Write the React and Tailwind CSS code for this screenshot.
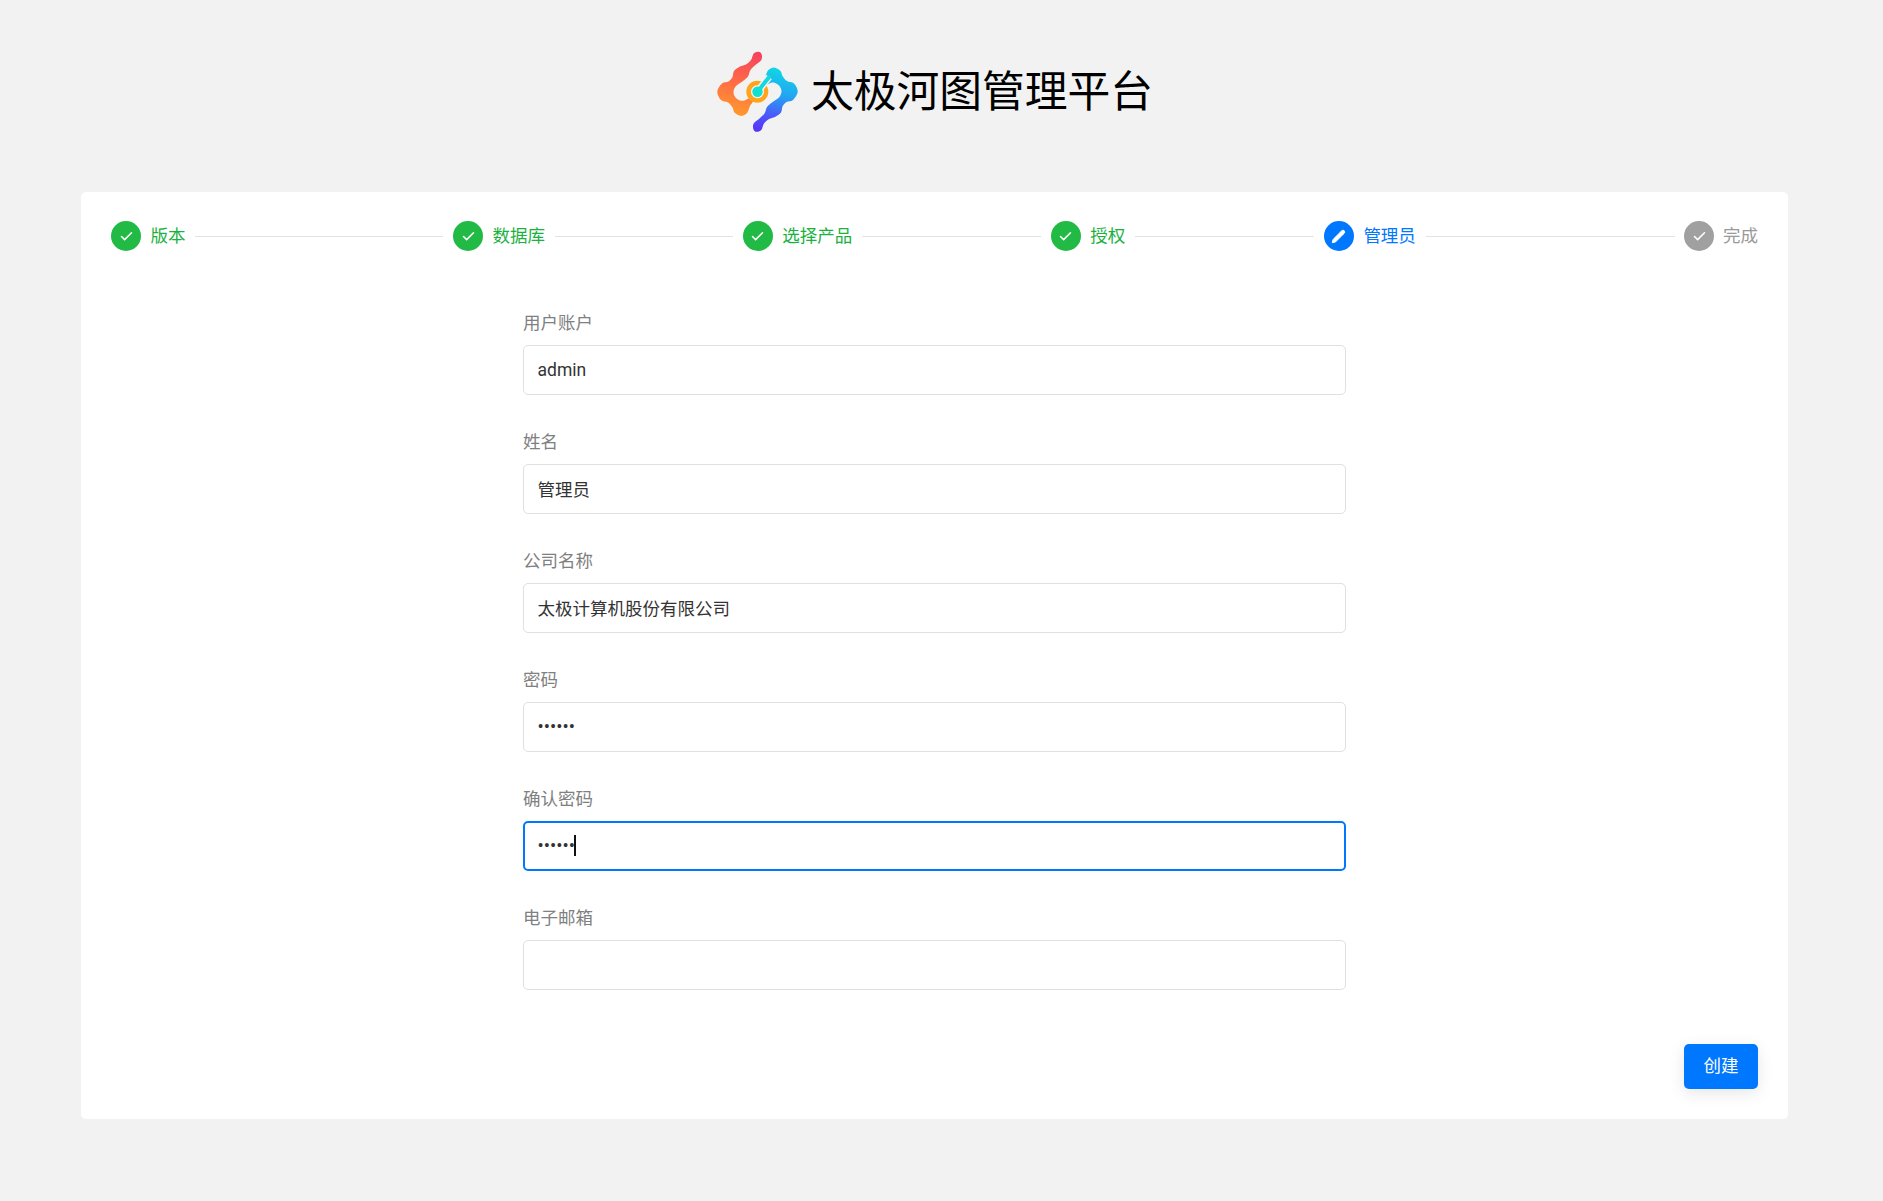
import { Check, Pencil } from 'lucide-react';

const font = "font-['Roboto','Noto_Sans_CJK_SC',sans-serif]";

const steps = [
    { label: '版本', state: 'done', line: 'w-[248px]' },
    { label: '数据库', state: 'done', line: 'w-[178px]' },
    { label: '选择产品', state: 'done', line: 'w-[179px]' },
    { label: '授权', state: 'done', line: 'w-[179px]' },
    { label: '管理员', state: 'active', line: 'w-[249px]' },
    { label: '完成', state: 'todo', line: '' },
];

const fields = [
    { label: '用户账户', value: 'admin' },
    { label: '姓名', value: '管理员', cjk: true },
    { label: '公司名称', value: '太极计算机股份有限公司', cjk: true },
    { label: '密码', value: '123456', secret: true },
    { label: '确认密码', value: '123456', secret: true, focused: true },
    { label: '电子邮箱', value: '' },
];

// outline of the warm half of the logo, the cool half is the same turned by 180deg
const warmOutline = [
    [57.7, 11.7], [53.7, 13.5], [51, 20], [46, 24.5], [40, 26.5], [34, 31], [32.5, 37], [28.5, 41.5],
    [22, 43.5], [17.3, 51.7], [21, 60], [28, 62.5], [32.5, 67.5], [34.5, 72.5], [41, 76], [47, 73],
    [50, 66], [53, 61], [49, 58.5], [44.5, 60.5], [40, 60.5], [35.5, 57.5], [33.5, 52], [36, 46],
    [43, 41], [48, 36.5], [50.5, 30], [56, 24.5], [61, 20.5], [62, 16], [60.5, 12.5],
];
const coolOutline = warmOutline.map(([x, y]) => [115 - x, 103.4 - y]);

// closed catmull-rom through the points
function smoothPath(pts) {
    const n = pts.length;
    let d = `M${pts[0][0]} ${pts[0][1]}`;
    for (let i = 0; i < n; i++) {
        const [p0, p1, p2, p3] = [pts[(i + n - 1) % n], pts[i], pts[(i + 1) % n], pts[(i + 2) % n]];
        const c1 = [p1[0] + (p2[0] - p0[0]) / 6, p1[1] + (p2[1] - p0[1]) / 6];
        const c2 = [p2[0] - (p3[0] - p1[0]) / 6, p2[1] - (p3[1] - p1[1]) / 6];
        d += `C${c1[0]} ${c1[1]} ${c2[0]} ${c2[1]} ${p2[0]} ${p2[1]}`;
    }
    return d + 'Z';
}

function Logo() {
    return (
        <svg viewBox="0 0 110 100" className="h-[100px] w-[110px] shrink-0" aria-hidden="true">
            <defs>
                <linearGradient id="warm" gradientUnits="userSpaceOnUse" x1="52" y1="12" x2="38" y2="76">
                    <stop offset="0" stopColor="#f5425f" />
                    <stop offset="0.5" stopColor="#ff6b45" />
                    <stop offset="1" stopColor="#ff9a2c" />
                </linearGradient>
                <linearGradient id="cool" gradientUnits="userSpaceOnUse" x1="72" y1="28" x2="60" y2="92">
                    <stop offset="0" stopColor="#10d6e4" />
                    <stop offset="0.4" stopColor="#24a2f4" />
                    <stop offset="0.7" stopColor="#4a5cf8" />
                    <stop offset="1" stopColor="#5a30f8" />
                </linearGradient>
            </defs>
            <path d={smoothPath(warmOutline)} fill="url(#warm)" />
            <circle cx="57.3" cy="51.7" r="8.5" fill="none" stroke="#ffa41e" strokeWidth="5" />
            <path d={smoothPath(coolOutline)} fill="url(#cool)" />
            {/* center dot */}
            <path d="M57.5 51.7 L69 37" fill="none" stroke="#f2f2f2" strokeWidth="7" />
            <circle cx="57.5" cy="51.7" r="6.5" fill="#f2f2f2" />
            <path d="M57.5 51.7 L70 36" fill="none" stroke="#14d8e0" strokeWidth="4" />
            <circle cx="57.5" cy="51.7" r="5.2" fill="#10e0d0" />
        </svg>
    );
}

function StepIcon({ state }) {
    const bg = state === 'done' ? 'bg-[#21ba45]' : state === 'active' ? 'bg-[#0077ff]' : 'bg-[#a0a0a0]';
    return (
        <span className={`flex h-[30px] w-[30px] shrink-0 items-center justify-center rounded-full ${bg}`}>
            {state === 'active' ? (
                <Pencil className="h-[15px] w-[15px] fill-white text-white" strokeWidth={1.5} />
            ) : (
                <Check className="h-[15px] w-[15px] text-white" strokeWidth={2.5} />
            )}
        </span>
    );
}

function Step({ step }) {
    const color =
        step.state === 'done' ? 'text-[#1bb13f]' : step.state === 'active' ? 'text-[#0077ff]' : 'text-[#999999]';
    const gap = step.state === 'todo' ? 'gap-[8.5px]' : 'gap-[9.5px]';
    return (
        <>
            <div className={`flex items-center ${gap}`}>
                <StepIcon state={step.state} />
                <span className={`text-[17.5px] leading-[30px] ${color}`}>{step.label}</span>
            </div>
            {step.line && <div className={`h-px bg-[#e3e3e3] ${step.line}`} />}
        </>
    );
}

function Field({ field }) {
    const border = field.focused ? 'border-2 border-[#0077ff] px-[12.5px]' : 'border border-[#e0e0e0] px-[13.5px]';
    const size = field.secret ? 'text-[18.5px]' : 'text-[17.5px]';
    return (
        <div className="mb-[34px]">
            <label className="mb-[9px] block pt-px text-[17.5px] leading-[25px] text-[#808080]">{field.label}</label>
            <div className="relative">
                <input
                    readOnly
                    type={field.secret ? 'password' : 'text'}
                    value={field.value}
                    className={`block h-[50px] w-full rounded-[5px] bg-white text-[#333333] outline-none ${size} ${border} ${field.cjk ? 'pb-[2px]' : ''} ${font}`}
                />
                {field.focused && (
                    <span className="absolute left-[51px] top-[14px] h-[21px] w-[2px] bg-[#111111]" />
                )}
            </div>
        </div>
    );
}

export default function App() {
    return (
        <div className={`min-h-[1201px] bg-[#f2f2f2] pl-[81px] pr-[95px] ${font}`}>
            <header className="flex h-[192px] items-center justify-center pb-[12px]">
                <div className="flex items-center gap-[1px] pr-[16px]">
                    <Logo />
                    <h1 className="pt-[5px] text-[42.75px] font-normal leading-none text-black">太极河图管理平台</h1>
                </div>
            </header>
            <main className="rounded-[5px] bg-white px-[30px] pt-[29px] pb-[30px]">
                <div className="flex items-center justify-between">
                    {steps.map((step) => (
                        <Step key={step.label} step={step} />
                    ))}
                </div>
                <form className="mx-auto mt-[59px] w-[823px] pb-[20px]">
                    {fields.map((field) => (
                        <Field key={field.label} field={field} />
                    ))}
                </form>
                <div className="flex justify-end">
                    <button
                        type="button"
                        className="h-[45px] w-[74px] rounded-[5px] bg-[#0077ff] text-[17.5px] text-white shadow-[0_4px_16px_rgba(0,0,0,0.1)]"
                    >
                        创建
                    </button>
                </div>
            </main>
        </div>
    );
}
